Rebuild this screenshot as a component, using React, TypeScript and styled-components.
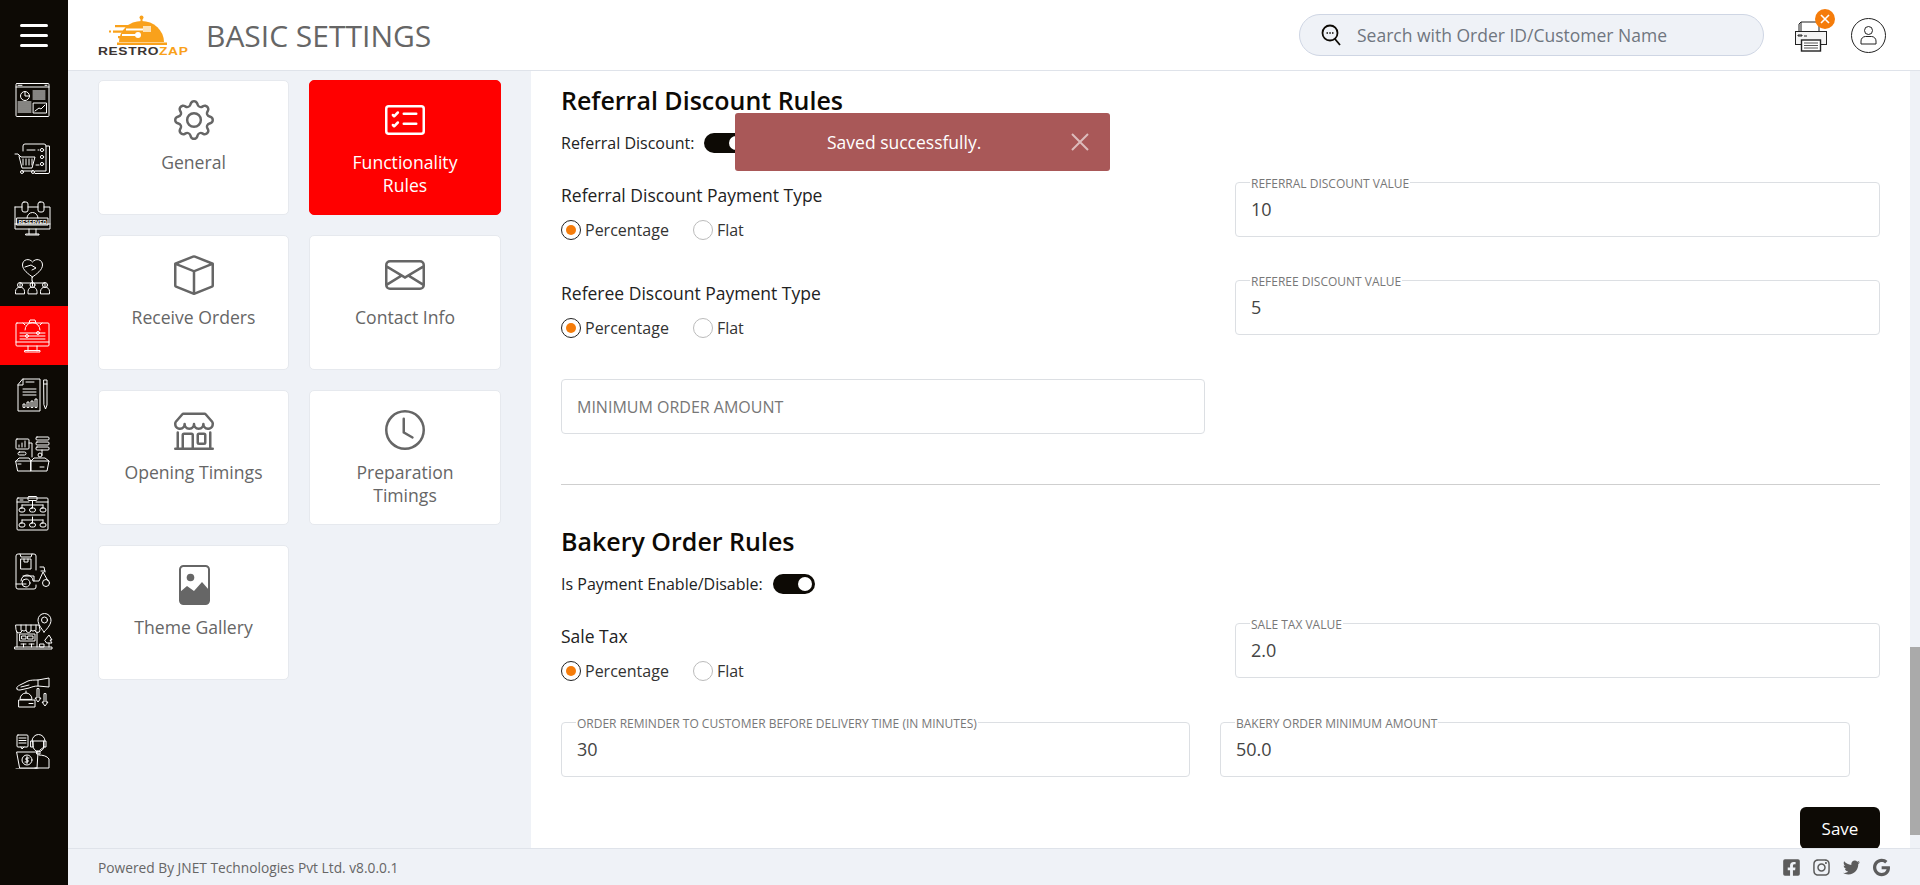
import React from 'react';
import styled, { createGlobalStyle } from 'styled-components';
import { BsGear, BsCardChecklist, BsBox, BsEnvelope, BsShop, BsClock } from 'react-icons/bs';
import { FaFacebookSquare, FaInstagram, FaTwitter, FaGoogle } from 'react-icons/fa';

const GlobalStyle = createGlobalStyle`
    html, body {
        margin: 0;
        height: 100%;
        overflow: hidden;
        font-family: "Open Sans", "Liberation Sans", sans-serif;
    }
    * { box-sizing: border-box; }
`

const Page = styled.div`
    display: flex;
    height: 100vh;
    position: relative;
    background: #eff2f7;
`
const Sidebar = styled.nav`
    width: 68px;
    flex: none;
    background: #0d0a05;
`
const Burger = styled.div`
    height: 70px;
    display: flex;
    flex-direction: column;
    justify-content: center;
    gap: 7px;
    padding-left: 20px;
    span {
        display: block;
        width: 28px;
        height: 3px;
        border-radius: 2px;
        background: #fff;
    }
`
const MenuItem = styled.div<{ $active?: boolean }>`
    height: 59px;
    display: flex;
    align-items: center;
    padding-left: 13px;
    background: ${props => props.$active ? '#ff0000' : 'transparent'};
`
const MenuSvg = styled.svg`
    width: 40px;
    height: 40px;
    fill: none;
    stroke: #fff;
    stroke-width: 1;
    stroke-linejoin: round;
    stroke-linecap: round;
    text {
        fill: #fff;
        stroke: none;
        font-family: "Liberation Sans", sans-serif;
        font-weight: 700;
    }
`
const Column = styled.div`
    flex: 1;
    min-width: 0;
    display: flex;
    flex-direction: column;
`
const Header = styled.header`
    height: 71px;
    flex: none;
    background: #fff;
    border-bottom: 1px solid #dfe3ea;
    display: flex;
    align-items: center;
    padding-left: 30px;
`
const LogoWrap = styled.div`
    width: 87px;
    display: flex;
    flex-direction: column;
    margin-top: 2px;
`
const LogoMark = styled.svg`
    width: 60px;
    height: 31px;
    margin-left: 10px;
    display: block;
`
const LogoText = styled.div`
    font-family: "Liberation Sans", sans-serif;
    font-weight: 700;
    font-size: 11px;
    line-height: 11px;
    letter-spacing: 0.5px;
    white-space: nowrap;
    color: #3d3533;
    transform: scaleX(1.25);
    transform-origin: left center;
    span { color: #f9a11b; }
`
const PageTitle = styled.h1`
    margin: 0 0 0 21px;
    font-size: 30px;
    font-weight: 400;
    color: #666;
    white-space: nowrap;
`
const SearchBox = styled.div`
    margin-left: auto;
    width: 465px;
    height: 42px;
    border-radius: 21px;
    border: 1px solid #cfd6e4;
    background: #eff2f7;
    display: flex;
    align-items: center;
    padding-left: 21px;
    gap: 14px;
`
const SearchInput = styled.input`
    flex: 1;
    min-width: 0;
    border: 0;
    outline: 0;
    background: transparent;
    font: 400 17.5px "Open Sans", sans-serif;
    color: #666;
    &::placeholder { color: #6f7680; opacity: 1; }
`
const HeaderIcons = styled.div`
    display: flex;
    align-items: center;
    gap: 24px;
    margin-left: 31px;
    margin-right: 34px;
`
const PrinterWrap = styled.div`
    position: relative;
    width: 32px;
    height: 33px;
`
const Badge = styled.span`
    position: absolute;
    top: -10px;
    right: -8px;
    width: 20px;
    height: 20px;
    border-radius: 50%;
    background: #f57c0a;
    color: #fff;
    display: flex;
    align-items: center;
    justify-content: center;
`
const Body = styled.div`
    flex: 1;
    min-height: 0;
    display: flex;
`
const CardPanel = styled.aside`
    width: 463px;
    flex: none;
    padding: 9px 0 0 30px;
    display: grid;
    grid-template-columns: 191px 192px;
    grid-auto-rows: 135px;
    column-gap: 20px;
    row-gap: 20px;
    align-content: start;
`
const Card = styled.div<{ $active?: boolean }>`
    background: ${props => props.$active ? '#ff0000' : '#fff'};
    color: ${props => props.$active ? '#fff' : '#666'};
    border: 1px solid ${props => props.$active ? '#ff0000' : '#e6e9ee'};
    border-radius: 5px;
    padding: 19px 20px 0;
    text-align: center;
    font-size: 17.6px;
    line-height: 23px;
    svg {
        display: block;
        margin: 0 auto 11px;
        width: 40px;
        height: 40px;
    }
`
const FormPanel = styled.main`
    flex: 1;
    min-width: 0;
    background: #fff;
    padding: 12px 30px 0;
    overflow: hidden;
    position: relative;
`
const SectionTitle = styled.h2<{ $gap?: number }>`
    margin: ${props => props.$gap ?? 0}px 0 0;
    font-size: 25px;
    line-height: 34px;
    font-weight: 600;
    color: #0d0a05;
`
const ToggleRow = styled.div`
    display: flex;
    align-items: center;
    gap: 10px;
    height: 20px;
    margin-top: 16px;
    font-size: 16px;
    color: #222;
`
const Toggle = styled.span<{ $on?: boolean }>`
    width: 42px;
    height: 20px;
    border-radius: 10px;
    background: ${props => props.$on ? '#0d0a05' : '#bbb'};
    display: flex;
    align-items: center;
    justify-content: ${props => props.$on ? 'flex-end' : 'flex-start'};
    padding: 0 3px;
    &::after {
        content: '';
        width: 14px;
        height: 14px;
        border-radius: 50%;
        background: #fff;
    }
`
const TwoCols = styled.div<{ $top: number }>`
    display: grid;
    grid-template-columns: 644px 645px;
    column-gap: 30px;
    margin-top: ${props => props.$top}px;
`
const RadioTitle = styled.div`
    font-size: 17.5px;
    line-height: 22px;
    margin-top: 2px;
    color: #222;
`
const RadioRow = styled.div`
    display: flex;
    gap: 24px;
    margin-top: 14px;
`
const RadioItem = styled.label`
    display: flex;
    align-items: center;
    gap: 4px;
    font-size: 16px;
    line-height: 20px;
    color: #333;
`
const RadioDot = styled.span<{ $checked?: boolean }>`
    width: 20px;
    height: 20px;
    border-radius: 50%;
    border: 1px solid ${props => props.$checked ? '#222' : '#bbb'};
    display: flex;
    align-items: center;
    justify-content: center;
    &::after {
        content: '';
        width: 10px;
        height: 10px;
        border-radius: 50%;
        background: ${props => props.$checked ? '#f57c0a' : 'transparent'};
    }
`
const FieldBox = styled.div`
    position: relative;
    height: 55px;
    border: 1px solid #dcdfe3;
    border-radius: 4px;
    background: #fff;
`
const FieldLabel = styled.label`
    position: absolute;
    left: 14px;
    top: -6px;
    padding: 0 1px;
    background: #fff;
    font-size: 12px;
    line-height: 13px;
    color: #777;
    white-space: nowrap;
`
const FieldInput = styled.input`
    display: block;
    width: 100%;
    height: 100%;
    border: 0;
    outline: 0;
    background: transparent;
    padding: 0 15px 2px;
    font: 400 18px "Open Sans", sans-serif;
    color: #444;
    &::placeholder { color: #777; opacity: 1; font-size: 16px; }
`
const Divider = styled.hr`
    border: 0;
    border-top: 1px solid #cfcfcf;
    margin: 50px 0 0;
`
const BottomRow = styled.div`
    display: grid;
    grid-template-columns: 629px 630px;
    column-gap: 30px;
    margin-top: 41px;
`
const SaveRow = styled.div`
    display: flex;
    justify-content: flex-end;
    margin-top: 30px;
`
const SaveBtn = styled.button`
    width: 80px;
    height: 42px;
    border: 0;
    border-radius: 6px;
    background: #0d0a05;
    color: #fff;
    font: 400 17px "Open Sans", sans-serif;
`
const ScrollTrack = styled.div`
    width: 10px;
    flex: none;
    background: #eff2f7;
    padding-top: 576px;
`
const ScrollThumb = styled.div`
    height: 188px;
    background: #aaa;
`
const Footer = styled.footer`
    height: 37px;
    flex: none;
    border-top: 1px solid #dfe3ea;
    display: flex;
    align-items: center;
    justify-content: space-between;
    padding: 0 30px;
    font-size: 13.75px;
    color: #666;
`
const Socials = styled.div`
    display: flex;
    gap: 13px;
    color: #5c5c5c;
    svg {
        display: block;
        width: 17px;
        height: 19px;
    }
`
const Toast = styled.div`
    position: absolute;
    left: 735px;
    top: 113px;
    width: 375px;
    height: 58px;
    border-radius: 3px;
    background: #a95858;
    color: #fff;
    font-size: 17.5px;
    display: flex;
    align-items: center;
    padding-left: 92px;
`
const ToastClose = styled.svg`
    position: absolute;
    right: 21px;
    top: 20px;
    width: 18px;
    height: 18px;
    stroke: rgba(255, 255, 255, 0.6);
    stroke-width: 2;
`

const menuIcons: React.ReactNode[] = [
    <>
        <rect x="3" y="3.5" width="33" height="33" rx="1" />
        <path d="M3 7h33M5 5.3h4M32 5.3h2" />
        <circle cx="12" cy="16" r="4.5" />
        <path d="M12 11.5V16h4.5M20 11h12M20 13h12M20 15h12M20 17h12M20 19h12M5 22h13M5 24h13M5 26h13M5 28h13M5 30h13M5 32h13" />
        <rect x="20.5" y="23" width="13" height="10" />
        <path d="M22 31l4-3 2 1 4-4" />
    </>,
    <>
        <path d="M10 12V7a2 2 0 0 1 2-2h19a2 2 0 0 1 2 2v25H22" />
        <path d="M33 7h3.5v26a1.5 1.5 0 0 1-1.5 1.5H22" />
        <path d="M2 15h3l3 3h14l-3 11H9L6 17" />
        <path d="M10 20v6M13 20v6M16 20v6M19 20v6M9 32h11" />
        <circle cx="9" cy="33" r="1.5" />
        <circle cx="20" cy="33" r="1.5" />
        <path d="M14 11h8M25 11h1" />
        <circle cx="29" cy="11" r="1.6" />
        <circle cx="29" cy="18" r="1.6" />
        <circle cx="29" cy="25" r="1.6" />
        <path d="M23 26h3" />
    </>,
    <>
        <path d="M2 9h7M15 9h10M31 9h6v22H2V9" />
        <rect x="9" y="4" width="6" height="10" rx="2" />
        <rect x="25" y="4" width="6" height="10" rx="2" />
        <path d="M2 26h35M16 31v5M23 31v5M13 37h13v-1H13z" />
        <rect x="4" y="20" width="31" height="7" />
        <path d="M14 20a5.500 5.500 0 0 1 11 0" />
        <text x="5.500" y="26" fontSize="5" textLength="28">RESERVED</text>
    </>,
    <>
        <path d="M19.500 20c-4-3-10-7-10-12 0-6 7-7 10-3 3-4 10-3 10 3 0 5-6 9-10 12z" />
        <path d="M12 10l6-2 5 3-4 2M19 20v4M7 29v-3h25v3M19.500 24v5" />
        <circle cx="7" cy="28" r="2.500" />
        <circle cx="19.500" cy="28" r="2.500" />
        <circle cx="32" cy="28" r="2.500" />
        <path d="M2.500 36.500v-2a4 4 0 0 1 9 0v2zM15 36.500v-2a4 4 0 0 1 9 0v2zM27.500 36.500v-2a4 4 0 0 1 9 0v2z" />
    </>,
    <>
        <rect x="3" y="7" width="33" height="23" rx="1" />
        <path d="M3 26h33M15 30v5M24 30v5M12 36h15v-1.500H12z" />
        <path d="M12 14a7.500 7.500 0 0 1 15 0M16 7l1-3h5l1 3M10 7l2 2M29 7l-2 2" />
        <path d="M7 17h25M7 20h25M7 23h25" />
        <circle cx="14" cy="20" r="1.500" />
        <circle cx="25" cy="17" r="1.500" />
    </>,
    <>
        <path d="M10 4h17v32H5V10zM10 4v6H5" />
        <path d="M13 7h8M10 14h13M10 17h13M10 20h13" />
        <path d="M10 32v-3h2v3zM14 32v-5h2v5zM18 32v-6h2v6zM22 32v-8h2v8z" />
        <path d="M31 5h3v25l-1.500 4-1.500-4zM31 9h3" />
    </>,
    <>
        <rect x="3" y="5" width="13" height="10" rx="1" />
        <path d="M6 13v-2M9 13V9M12 13V7" />
        <rect x="23" y="3" width="13" height="3" rx="1" />
        <rect x="23" y="8" width="13" height="3" rx="1" />
        <rect x="23" y="13" width="13" height="3" rx="1" />
        <rect x="5" y="18" width="8" height="3" rx="1.500" />
        <path d="M16 9h3v14M29 16v4" />
        <circle cx="27" cy="21" r="2" />
        <path d="M3 27h15v10H5zM18 27h18l-2 10H18zM3 27l3-3h10l2 3 3-3h11l4 3M8 30H5M27 33h4" />
    </>,
    <>
        <rect x="4" y="5" width="31" height="32" rx="1" />
        <path d="M4 9h12M23 9h12M7 7h3" />
        <rect x="15" y="3.500" width="9" height="4" rx="1" />
        <path d="M19.500 8v4M9 12h21M9 12v3M19.500 12v3M30 12v3" />
        <rect x="6" y="15" width="6" height="4" rx="2" />
        <rect x="16.500" y="15" width="6" height="4" rx="2" />
        <rect x="27" y="15" width="6" height="4" rx="2" />
        <path d="M7 22h25M19.500 24v3M9 27h21M9 27v3M19.500 27v3M30 27v3" />
        <rect x="6" y="30" width="6" height="4" rx="2" />
        <rect x="16.500" y="30" width="6" height="4" rx="2" />
        <rect x="27" y="30" width="6" height="4" rx="2" />
    </>,
    <>
        <path d="M23 18V4a2 2 0 0 0-2-2H5a2 2 0 0 0-2 2v31a2 2 0 0 0 2 2h16a2 2 0 0 0 2-2v-2" />
        <path d="M7 2l1 3h10l1-3M3 32h10" />
        <rect x="8" y="7" width="10" height="10" />
        <path d="M11 7v3h4V7" />
        <path d="M8 29a6 6 0 0 1 12 0h6l4-9 5 9" />
        <path d="M27 15h4l1 5M28 19h4M10 24h11v5" />
        <circle cx="13" cy="31" r="4" />
        <circle cx="33" cy="31" r="3.500" />
    </>,
    <>
        <path d="M2 38h37v-2H2zM4 36V21M24 21v15" />
        <path d="M3 14h23l1 5a2.500 2.500 0 0 1-5 0 2.500 2.500 0 0 1-4 0 2.500 2.500 0 0 1-5 0 2.500 2.500 0 0 1-4 0 2.500 2.500 0 0 1-6 0z" />
        <path d="M8 14v5M13 14v5M18 14v5M23 14v5" />
        <rect x="7" y="23" width="15" height="7" />
        <rect x="9" y="25" width="4" height="3" />
        <rect x="15" y="25" width="5" height="3" />
        <path d="M8 33h5M10.500 33v3M16 33h5M18.500 33v3" />
        <path d="M31 21c-3-4-6-8-6-12a6.500 6.500 0 0 1 13 0c0 4-3 8-7 12z" />
        <circle cx="31.500" cy="9" r="3" />
        <path d="M32 29l4-5 3 5h-2l2 3h-5zM36 32v4M27 33h4v3h-4z" />
    </>,
    <>
        <path d="M4 19c-1-2 1-3 3-4l8-4c3-1 6-1 10-1l11-2v9l-11-1c-4 0-6 1-9 2l-9 2c-2 0-3 0-3-1z" />
        <path d="M8 17l8-2M25 10v6" />
        <path d="M7 29a6 6 0 0 1 12 0zM13 21v2" />
        <rect x="6" y="30" width="16" height="7" />
        <path d="M16 33.500h4" />
        <path d="M24 19v9h-2l3 4 3-4h-2v-9zM31 24v8h-2l3 4 3-4h-2v-8z" />
    </>,
    <g transform="translate(0 4)">
        <rect x="4" y="2" width="11" height="12" rx="1" />
        <path d="M6 5h7M6 7.500h7M6 10h7M8 14l1 2 2-2M19 8a6.500 6.500 0 0 1 13 0M18 8h2v6h-2zM31 8h2v6h-2z" />
        <path d="M20 8h11v5a5.500 5.500 0 0 1-11 0zM24 18h3v3h-3zM31 14l-4 3" />
        <path d="M4 19h21l-1 16H7zM3 36h22" />
        <circle cx="14" cy="27" r="5" />
        <path d="M16 25h-3v2h2v2h-3M14 23.500v7" />
        <path d="M26 22c4 0 8 1 10 4v9H22" />
    </g>,
]

const GalleryIcon: React.FC = () => (
    <svg viewBox="0 0 40 40">
        <rect x="6" y="1" width="29" height="38" rx="3.500" fill="none" stroke="#666" strokeWidth="2" />
        <circle cx="16.500" cy="12.500" r="3.800" fill="#666" />
        <path d="M6 27l7-6 7 5 8-9 7 8v11a3 3 0 0 1-3 3H9a3 3 0 0 1-3-3z" fill="#666" />
    </svg>
)

const settingCards = [
    { label: 'General', icon: <BsGear /> },
    { label: 'Functionality Rules', icon: <BsCardChecklist />, active: true },
    { label: 'Receive Orders', icon: <BsBox /> },
    { label: 'Contact Info', icon: <BsEnvelope /> },
    { label: 'Opening Timings', icon: <BsShop /> },
    { label: 'Preparation Timings', icon: <BsClock /> },
    { label: 'Theme Gallery', icon: <GalleryIcon /> },
]

const Radios: React.FC = () => (
    <RadioRow>
        <RadioItem><RadioDot $checked />Percentage</RadioItem>
        <RadioItem><RadioDot />Flat</RadioItem>
    </RadioRow>
)

const Field: React.FC<{ label?: string; value?: string; placeholder?: string }> = ({ label, value, placeholder }) => (
    <FieldBox>
        {label && <FieldLabel>{label}</FieldLabel>}
        <FieldInput readOnly defaultValue={value} placeholder={placeholder} />
    </FieldBox>
)

export default function App() {
    return (
        <Page>
            <GlobalStyle />
            <Sidebar>
                <Burger><span /><span /><span /></Burger>
                {menuIcons.map((icon, i) => (
                    <MenuItem key={i} $active={i === 4}>
                        <MenuSvg viewBox="0 0 40 40">{icon}</MenuSvg>
                    </MenuItem>
                ))}
            </Sidebar>
            <Column>
                <Header>
                    <LogoWrap>
                        <LogoMark viewBox="0 0 60 31">
                            <circle cx="33.500" cy="2.500" r="2" fill="#f9a11b" />
                            <path d="M32.500 4h2v3h-2z" fill="#f9a11b" />
                            <path d="M11 27a22.500 21 0 0 1 45 0z" fill="#f9a11b" />
                            <path d="M9 27.500h50V30H9z" fill="#f9a11b" />
                            <path d="M7 10h17v2.200H7zM1 15.500h2v2H1zM5 15.500h18v2.200H5zM10 21h14v2.200H10z" fill="#f9a11b" />
                            <path d="M18 13.500h18v2H18zM14 19h16v2H14z" fill="#fff" />
                            <circle cx="30" cy="20" r="3" fill="#fff" />
                            <rect x="35" y="11" width="8" height="6" fill="#fde2b6" />
                        </LogoMark>
                        <LogoText>RESTRO<span>ZAP</span></LogoText>
                    </LogoWrap>
                    <PageTitle>BASIC SETTINGS</PageTitle>
                    <SearchBox>
                        <svg width="20" height="24" viewBox="0 0 20 24" fill="none" stroke="#0d0a05">
                            <circle cx="9" cy="10" r="7.500" strokeWidth="1.800" />
                            <path d="M14 16l5 6" strokeWidth="1.800" />
                            <path d="M5.500 10h1.500M8.300 10h1.500M11 10h1.500" strokeWidth="1.600" />
                        </svg>
                        <SearchInput placeholder="Search with Order ID/Customer Name" />
                    </SearchBox>
                    <HeaderIcons>
                        <PrinterWrap>
                            <svg width="32" height="33" viewBox="0 0 32 33" fill="none" stroke="#222" strokeWidth="1">
                                <path d="M6 13V3h18v10M6 3L4 5v8" />
                                <rect x="0.500" y="12.500" width="31" height="13" fill="#f4f4f4" />
                                <path d="M3 16h4v1H3zM9 17h3" />
                                <rect x="6.500" y="21" width="19" height="11" fill="#fff" strokeWidth="1.400" />
                                <path d="M9 24h14M9 26.500h14M9 29h14" stroke="#555" strokeWidth="1.200" />
                            </svg>
                            <Badge>
                                <svg width="10" height="10" viewBox="0 0 10 10" stroke="#fff" strokeWidth="1.600">
                                    <path d="M1 1l8 8M9 1l-8 8" />
                                </svg>
                            </Badge>
                        </PrinterWrap>
                        <svg width="35" height="35" viewBox="0 0 35 35" fill="none" stroke="#222" strokeWidth="1">
                            <circle cx="17.500" cy="17.500" r="17" />
                            <circle cx="17.500" cy="12.500" r="4" />
                            <path d="M10 26v-3a4.500 4.500 0 0 1 4.500-4.500h6A4.500 4.500 0 0 1 25 23v3z" />
                        </svg>
                    </HeaderIcons>
                </Header>
                <Body>
                    <CardPanel>
                        {settingCards.map(card => (
                            <Card key={card.label} $active={card.active}>
                                {card.icon}
                                {card.label}
                            </Card>
                        ))}
                    </CardPanel>
                    <FormPanel>
                        <SectionTitle>Referral Discount Rules</SectionTitle>
                        <ToggleRow>Referral Discount:<Toggle $on /></ToggleRow>
                        <TwoCols $top={29}>
                            <div>
                                <RadioTitle>Referral Discount Payment Type</RadioTitle>
                                <Radios />
                            </div>
                            <Field label="REFERRAL DISCOUNT VALUE" value="10" />
                        </TwoCols>
                        <TwoCols $top={40}>
                            <div>
                                <RadioTitle>Referee Discount Payment Type</RadioTitle>
                                <Radios />
                            </div>
                            <Field label="REFEREE DISCOUNT VALUE" value="5" />
                        </TwoCols>
                        <TwoCols $top={41}>
                            <Field placeholder="MINIMUM ORDER AMOUNT" />
                        </TwoCols>
                        <Divider />
                        <SectionTitle $gap={39}>Bakery Order Rules</SectionTitle>
                        <ToggleRow>Is Payment Enable/Disable:<Toggle $on /></ToggleRow>
                        <TwoCols $top={29}>
                            <div>
                                <RadioTitle>Sale Tax</RadioTitle>
                                <Radios />
                            </div>
                            <Field label="SALE TAX VALUE" value="2.0" />
                        </TwoCols>
                        <BottomRow>
                            <Field label="ORDER REMINDER TO CUSTOMER BEFORE DELIVERY TIME (IN MINUTES)" value="30" />
                            <Field label="BAKERY ORDER MINIMUM AMOUNT" value="50.0" />
                        </BottomRow>
                        <SaveRow><SaveBtn>Save</SaveBtn></SaveRow>
                    </FormPanel>
                    <ScrollTrack><ScrollThumb /></ScrollTrack>
                </Body>
                <Footer>
                    <span>Powered By JNET Technologies Pvt Ltd. v8.0.0.1</span>
                    <Socials>
                        <FaFacebookSquare />
                        <FaInstagram />
                        <FaTwitter />
                        <FaGoogle />
                    </Socials>
                </Footer>
            </Column>
            <Toast>
                Saved successfully.
                <ToastClose viewBox="0 0 18 18"><path d="M1 1l16 16M17 1L1 17" /></ToastClose>
            </Toast>
        </Page>
    );
}
